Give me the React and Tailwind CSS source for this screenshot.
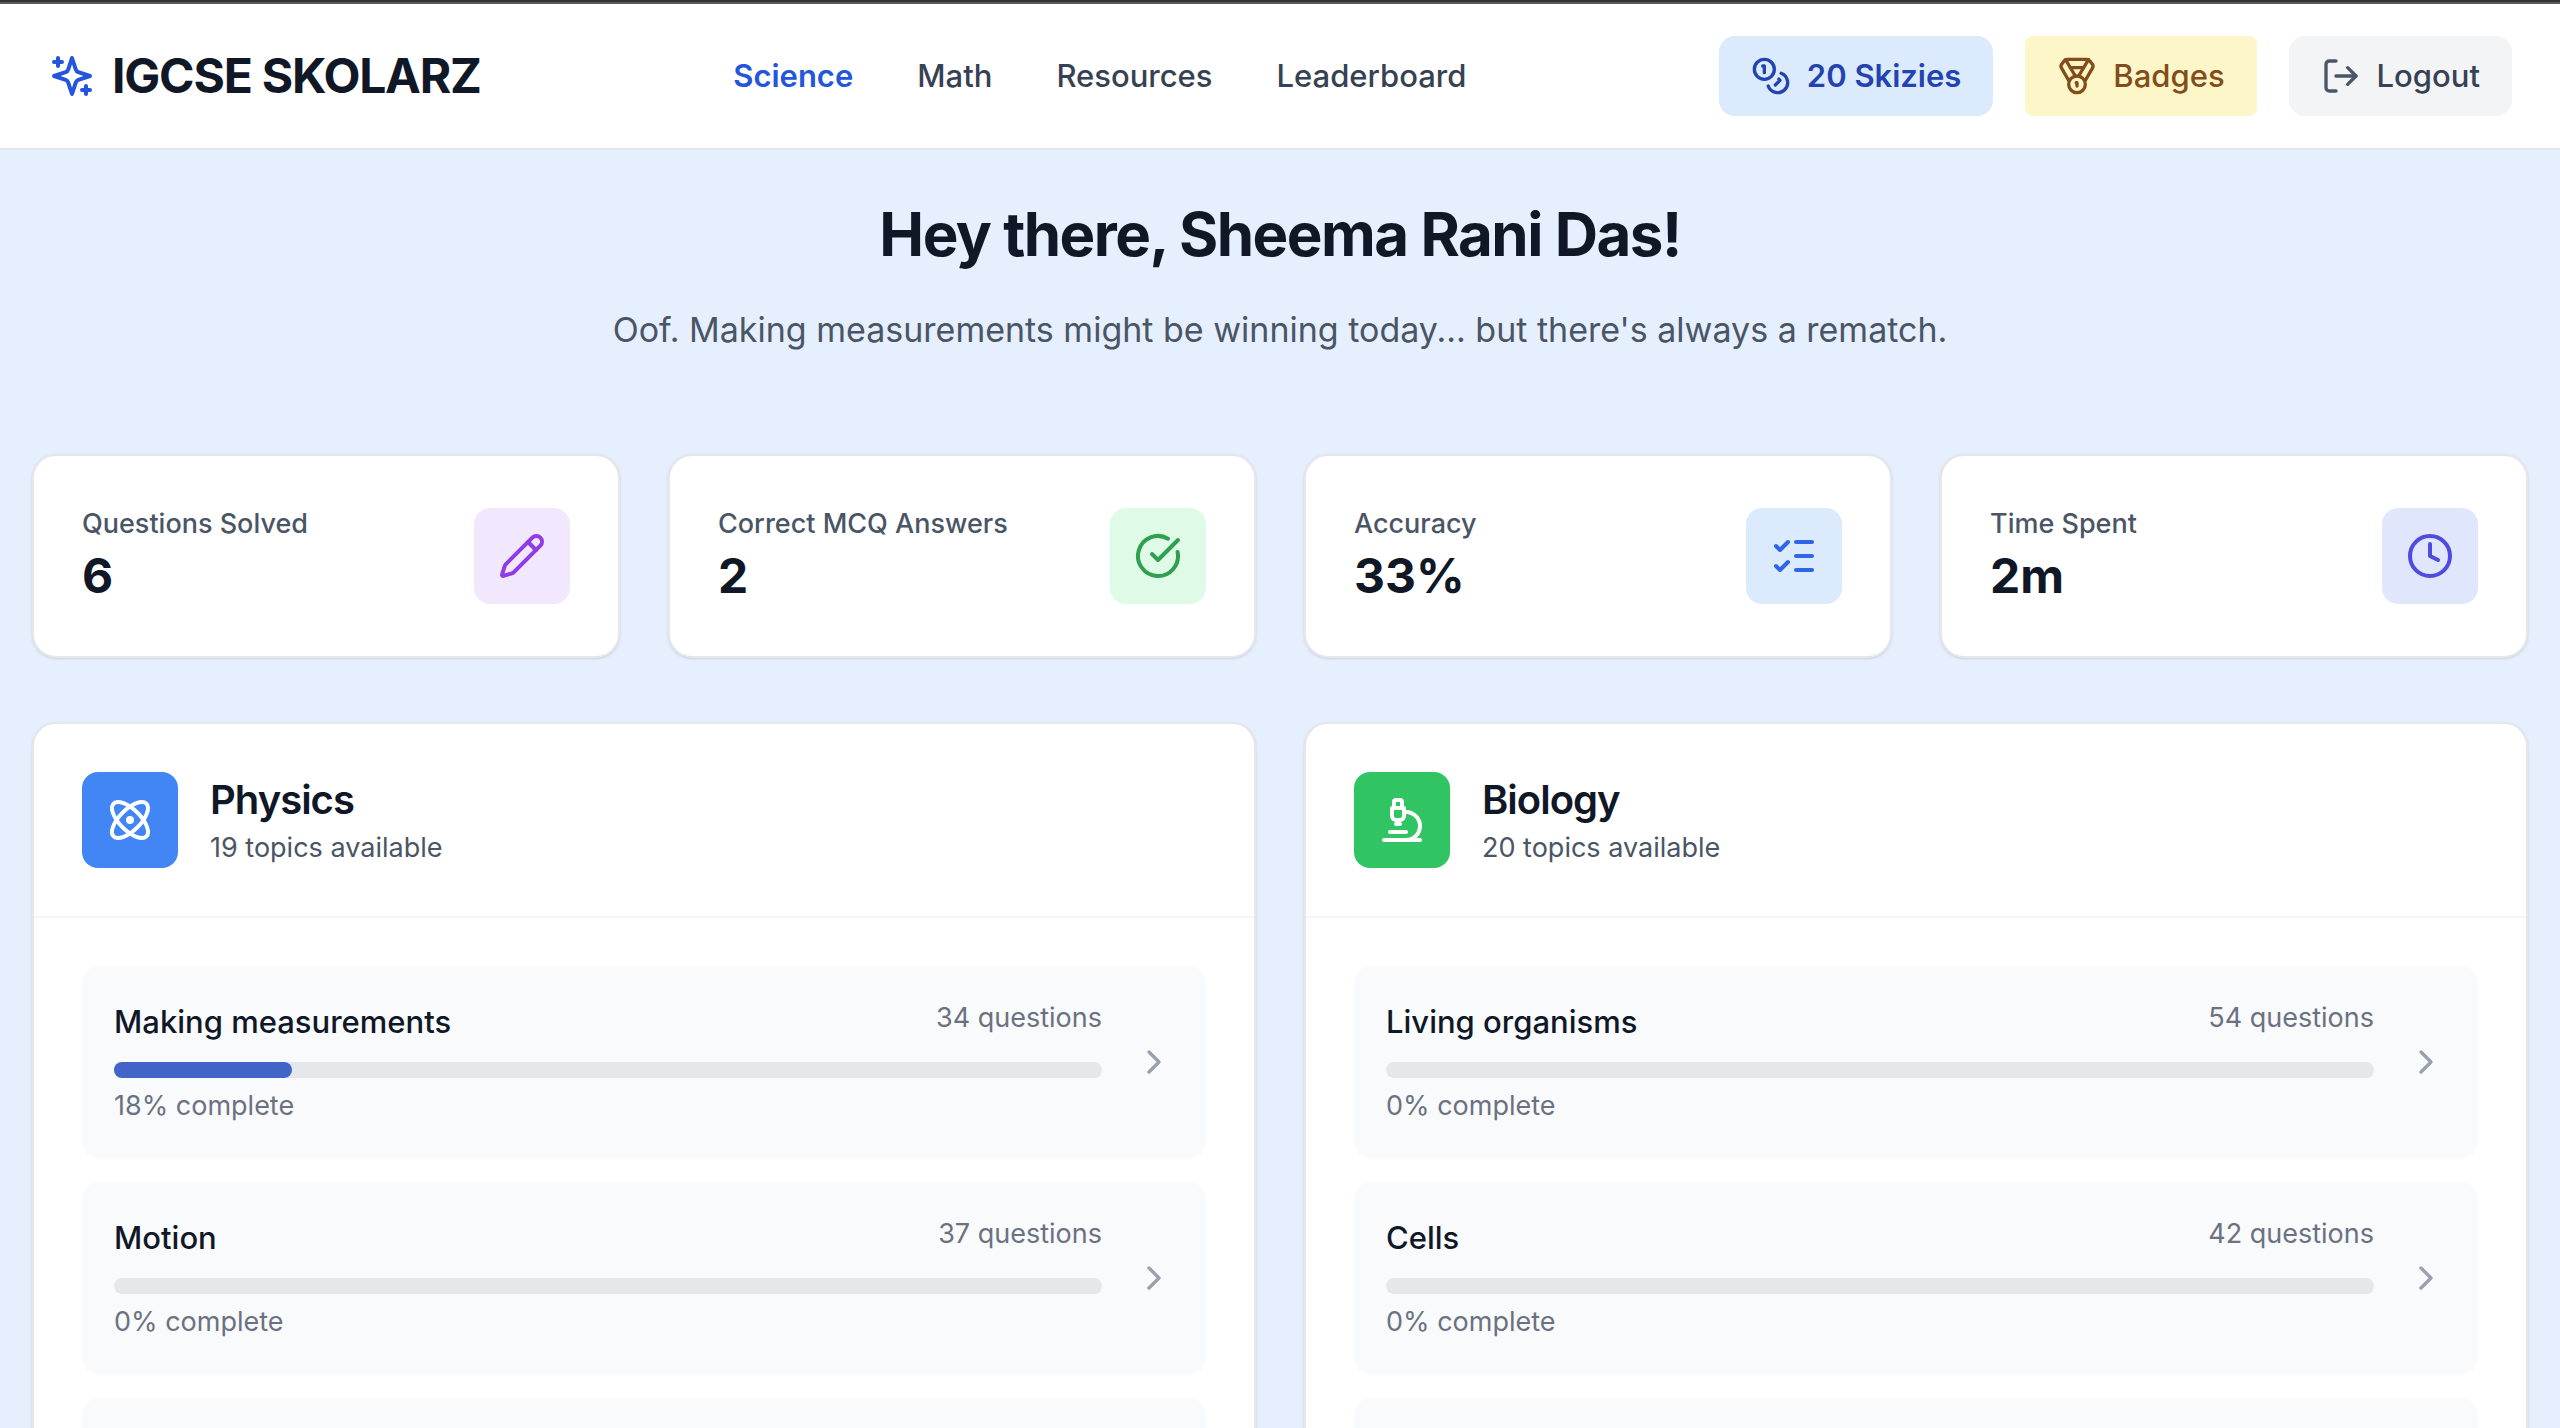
import { Atom, ChevronRight, CircleCheckBig, Clock, Coins, ListChecks, LogOut, Medal, Microscope, Pencil } from 'lucide-react';

const NAV_LINKS = ['Science', 'Math', 'Resources', 'Leaderboard'];

const STATS = [
  { label: 'Questions Solved',    value: '6',   icon: Pencil,         tint: 'bg-[#f1e8fd] text-[#8f3ce6]' },
  { label: 'Correct MCQ Answers', value: '2',   icon: CircleCheckBig, tint: 'bg-[#dffbe8] text-[#2fa04f]' },
  { label: 'Accuracy',            value: '33%', icon: ListChecks,     tint: 'bg-[#dceafd] text-[#2f66e8]' },
  { label: 'Time Spent',          value: '2m',  icon: Clock,          tint: 'bg-[#e0e7fd] text-[#4f4ae0]' },
];

const SUBJECTS = [
  {
    name: 'Physics',
    icon: Atom,
    color: 'bg-[#4285f4]',
    available: 19,
    topics: [
      { name: 'Making measurements', questions: 34, progress: 18 },
      { name: 'Motion', questions: 37, progress: 0 },
      { name: 'Forces and motion', questions: 41, progress: 0 },
    ],
  },
  {
    name: 'Biology',
    icon: Microscope,
    color: 'bg-[#30c463]',
    available: 20,
    topics: [
      { name: 'Living organisms', questions: 54, progress: 0 },
      { name: 'Cells', questions: 42, progress: 0 },
      { name: 'Enzymes', questions: 38, progress: 0 },
    ],
  },
];

function SparklesIcon({ className }) {
  return (
    <svg className={className} viewBox="0 0 24 24" fill="none" stroke="currentColor" strokeWidth="2" strokeLinecap="round" strokeLinejoin="round">
      <path d="m12 3-1.912 5.813a2 2 0 0 1-1.275 1.275L3 12l5.813 1.912a2 2 0 0 1 1.275 1.275L12 21l1.912-5.813a2 2 0 0 1 1.275-1.275L21 12l-5.813-1.912a2 2 0 0 1-1.275-1.275L12 3Z" />
      <path d="M5 3v4M19 17v4M3 5h4M17 19h4" />
    </svg>
  );
}

function Header() {
  return (
    <header className="flex items-center justify-between border-t-2 border-b-2 border-t-[#5c5c5c] border-b-gray-200 bg-white px-12 py-8">
      <a href="#" className="flex items-center gap-4">
        <SparklesIcon className="size-12 text-[#2456dc]" />
        <span className="text-5xl font-bold tracking-tight">IGCSE SKOLARZ</span>
      </a>

      <nav className="flex items-center gap-16 text-[31px] leading-12 font-medium text-gray-700">
        {NAV_LINKS.map((link) => (
          <a key={link} href="#" className={link === 'Science' ? 'font-semibold text-[#2456dc]' : ''}>
            {link}
          </a>
        ))}
      </nav>

      <div className="flex items-center gap-8 text-[31px] leading-12">
        <button className="flex items-center gap-4 rounded-2xl bg-[#dceafd] px-8 py-4 font-semibold text-[#2243b0]">
          <Coins className="size-10" />
          20 Skizies
        </button>
        <button className="flex items-center gap-4 rounded-lg bg-[#fdf6c8] px-8 py-4 font-medium text-[#834d1b]">
          <Medal className="size-10" />
          Badges
        </button>
        <button className="flex items-center gap-4 rounded-2xl bg-gray-100 px-8 py-4 font-medium text-gray-700">
          <LogOut className="size-10 text-gray-600" />
          Logout
        </button>
      </div>
    </header>
  );
}

function StatCard({ label, value, icon: Icon, tint }) {
  return (
    <div className="flex items-center justify-between rounded-3xl border-2 border-gray-200 bg-white p-12 shadow-sm">
      <div>
        <p className="text-[27px] leading-10 font-medium text-gray-600">{label}</p>
        <p className="text-5xl leading-16 font-bold">{value}</p>
      </div>
      <div className={`rounded-2xl p-6 ${tint}`}>
        <Icon className="size-12" />
      </div>
    </div>
  );
}

function TopicRow({ name, questions, progress }) {
  return (
    <a href="#" className="flex items-center gap-8 rounded-2xl bg-[#f9fafc] p-8">
      <div className="flex-1">
        <div className="mb-4 flex items-start justify-between">
          <h3 className="text-[31px] leading-12 font-medium">{name}</h3>
          <span className="text-[27px] leading-10 text-gray-500">{questions} questions</span>
        </div>
        <div className="h-4 rounded-full bg-gray-200">
          <div className="h-4 rounded-full bg-[#4164c8]" style={{ width: `${progress}%` }} />
        </div>
        <p className="mt-2 text-[27px] leading-10 text-gray-500">{progress}% complete</p>
      </div>
      <ChevronRight className="size-10 text-gray-400" />
    </a>
  );
}

function SubjectCard({ name, icon: Icon, color, available, topics }) {
  return (
    <section className="rounded-3xl border-2 border-gray-200 bg-white shadow-sm">
      <div className="flex items-center gap-8 border-b-2 border-gray-100 p-12">
        <div className={`rounded-2xl p-6 text-white ${color}`}>
          <Icon className="size-12" />
        </div>
        <div>
          <h2 className="text-[40px] leading-14 font-semibold tracking-tight">{name}</h2>
          <p className="text-[27px] leading-10 text-gray-600">{available} topics available</p>
        </div>
      </div>
      <div className="flex flex-col gap-6 p-12">
        {topics.map((topic) => (
          <TopicRow key={topic.name} {...topic} />
        ))}
      </div>
    </section>
  );
}

export default function App() {
  return (
    <div className="min-h-screen border-t-2 border-[#333333] bg-[#e6effe] font-['Inter',sans-serif] text-gray-900">
      <Header />
      <main className="px-8 py-12">
        <div className="mb-24 text-center">
          <h1 className="mb-8 text-6xl leading-18 font-bold tracking-tight">Hey there, Sheema Rani Das!</h1>
          <p className="text-[34px] leading-14 text-gray-600">
            Oof. Making measurements might be winning today... but there's always a rematch.
          </p>
        </div>

        <div className="mb-16 grid grid-cols-4 gap-12">
          {STATS.map((stat) => (
            <StatCard key={stat.label} {...stat} />
          ))}
        </div>

        <div className="grid grid-cols-2 gap-12">
          {SUBJECTS.map((subject) => (
            <SubjectCard key={subject.name} {...subject} />
          ))}
        </div>
      </main>
    </div>
  );
}
